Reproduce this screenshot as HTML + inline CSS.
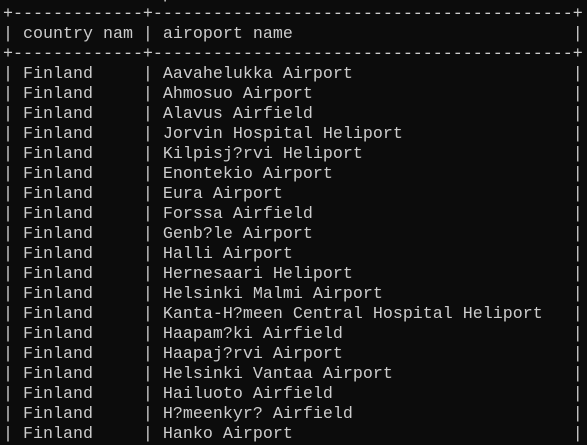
<!DOCTYPE html>
<html><head><meta charset="utf-8"><style>
html,body{margin:0;padding:0;background:#0c0c0c;width:587px;height:436px;overflow:hidden}
pre{position:absolute;left:3px;top:-15px;margin:0;font-family:"Liberation Mono",monospace;font-size:16.67px;line-height:20px;color:#cccccc;white-space:pre}
</style></head><body><pre>                p       _                  _      
+-------------+------------------------------------------+
| country nam | airoport name                            |
+-------------+------------------------------------------+
| Finland     | Aavahelukka Airport                      |
| Finland     | Ahmosuo Airport                          |
| Finland     | Alavus Airfield                          |
| Finland     | Jorvin Hospital Heliport                 |
| Finland     | Kilpisj?rvi Heliport                     |
| Finland     | Enontekio Airport                        |
| Finland     | Eura Airport                             |
| Finland     | Forssa Airfield                          |
| Finland     | Genb?le Airport                          |
| Finland     | Halli Airport                            |
| Finland     | Hernesaari Heliport                      |
| Finland     | Helsinki Malmi Airport                   |
| Finland     | Kanta-H?meen Central Hospital Heliport   |
| Finland     | Haapam?ki Airfield                       |
| Finland     | Haapaj?rvi Airport                       |
| Finland     | Helsinki Vantaa Airport                  |
| Finland     | Hailuoto Airfield                        |
| Finland     | H?meenkyr? Airfield                      |
| Finland     | Hanko Airport                            |
</pre></body></html>
